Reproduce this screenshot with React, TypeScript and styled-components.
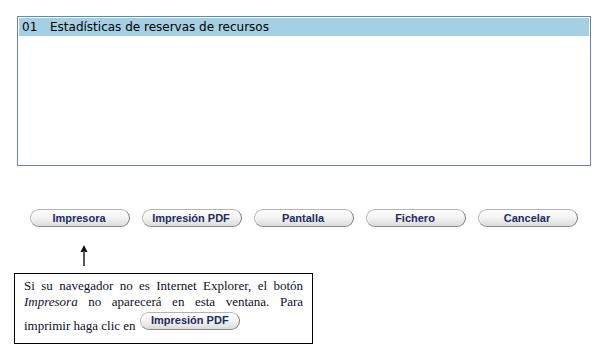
import styled, { createGlobalStyle } from "styled-components";

const GlobalStyle = createGlobalStyle`
  html, body {
    margin: 0;
    padding: 0;
    background: #ffffff;
  }
`;

const buttons = ["Impresora", "Impresión PDF", "Pantalla", "Fichero", "Cancelar"];

export default function App() {
  return (
    <Page>
      <GlobalStyle />
      <ListPanel>
        <ListRow>
          <RowNumber>01</RowNumber>
          <span>Estadísticas de reservas de recursos</span>
        </ListRow>
      </ListPanel>
      <ButtonBar>
        {buttons.map((b) => (
          <PillButton key={b}>{b}</PillButton>
        ))}
      </ButtonBar>
      <Arrow>
        <svg width="8" height="21" viewBox="0 0 8 21">
          <path d="M4 0 L7.5 7 L0.5 7 Z" fill="#111" />
          <rect x="3" y="6" width="2" height="15" fill="#555" />
        </svg>
      </Arrow>
      <NoteBox>
        Si su navegador no es Internet Explorer, el botón <em>Impresora</em> no
        aparecerá en esta ventana. Para imprimir haga clic en{" "}
        <InlineButton>Impresión PDF</InlineButton>
      </NoteBox>
    </Page>
  );
}

const Page = styled.div`
  display: flex;
  flex-direction: column;
  padding: 16px 0 0 17px;
`;

const ListPanel = styled.div`
  box-sizing: border-box;
  width: 574px;
  height: 150px;
  border: 1px solid #6a87a8;
  padding: 1px;
`;

const ListRow = styled.div`
  display: flex;
  align-items: center;
  height: 18px;
  background: #a3d0e4;
  padding-left: 3px;
  font-family: "DejaVu Sans", Verdana, sans-serif;
  font-size: 12px;
  color: #000;
`;

const RowNumber = styled.span`
  width: 28px;
`;

const ButtonBar = styled.div`
  display: flex;
  gap: 12px;
  margin: 43px 0 0 13px;
`;

const PillButton = styled.span`
  box-sizing: border-box;
  display: inline-flex;
  align-items: center;
  justify-content: center;
  width: 100px;
  height: 18px;
  border-radius: 9px;
  border: 1px solid #b5b5b5;
  border-right-color: #7d7d7d;
  border-bottom-color: #8a8a8a;
  background: linear-gradient(#ffffff 0%, #f4f4f4 45%, #dcdcdc 100%);
  box-shadow: inset 1px 1px 0 #ffffff;
  font-family: "Liberation Sans", Arial, sans-serif;
  font-weight: bold;
  font-size: 11px;
  color: #1c2c5c;
  text-indent: -2px;
`;

const InlineButton = styled(PillButton)`
  display: inline-block;
  overflow: hidden;
  text-align: center;
  text-indent: 0;
  line-height: 15px;
  vertical-align: baseline;
  margin: 2px 0 0 1px;
`;

const Arrow = styled.div`
  display: flex;
  margin: 18px 0 0 63px;
  height: 21px;
`;

const NoteBox = styled.div`
  box-sizing: border-box;
  width: 299px;
  height: 71px;
  margin: 7px 0 0 -3px;
  border: 1px solid #000;
  padding: 4px 9px 0 9px;
  font-family: "Liberation Serif", "Times New Roman", serif;
  font-size: 13px;
  line-height: 16px;
  text-align: justify;
  color: #10102a;
  em {
    font-style: italic;
  }
`;
